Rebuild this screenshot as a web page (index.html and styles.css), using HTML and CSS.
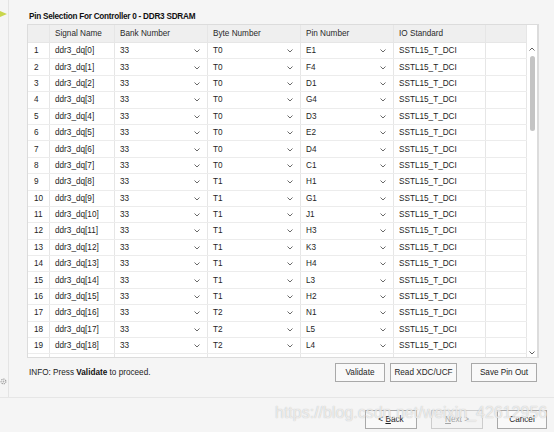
FILE: index.html
```html
<!DOCTYPE html>
<html>
<head>
<meta charset="utf-8">
<link rel="stylesheet" href="styles.css">
</head>
<body>
<div class="app">
  <div class="top">
    <div class="side">
      <svg class="side-arrow" viewBox="0 0 8 8" width="8" height="8"><path d="M0 1 L7 4 L0 7 Z" fill="#c9d64c"/></svg>
      <svg class="side-icon" viewBox="0 0 7 7" width="7" height="7"><circle cx="3.5" cy="3.5" r="2.4" fill="none" stroke="#9a9a9a" stroke-width="1.1" stroke-dasharray="1.2 0.8"/><circle cx="3.5" cy="3.5" r="0.9" fill="#b0b0b0"/></svg>
    </div>
    <div class="main">
      <div class="title">Pin Selection For Controller 0 - DDR3 SDRAM</div>
      <div class="grid">
        <div class="grid-body">
          <div class="row head">
            <div class="cell"></div>
            <div class="cell">Signal Name</div>
            <div class="cell">Bank Number</div>
            <div class="cell">Byte Number</div>
            <div class="cell">Pin Number</div>
            <div class="cell">IO Standard</div>
            <div class="cell"></div>
          </div>
          <div class="rows" id="rows"></div>
        </div>
        <div class="scroll">
          <svg class="sarrow" viewBox="0 0 6 4" width="6" height="4"><path d="M0.5 3.5 L3 1 L5.5 3.5" fill="none" stroke="#606060" stroke-width="1"/></svg>
          <div class="thumb"></div>
          <div class="spacer"></div>
          <svg class="sarrow" viewBox="0 0 6 4" width="6" height="4"><path d="M0.5 0.5 L3 3 L5.5 0.5" fill="none" stroke="#606060" stroke-width="1"/></svg>
        </div>
      </div>
      <div class="actions">
        <div class="info">INFO: Press <b>Validate</b> to proceed.</div>
        <button class="btn b-validate">Validate</button>
        <button class="btn b-read">Read XDC/UCF</button>
        <button class="btn b-save">Save Pin Out</button>
      </div>
    </div>
  </div>
  <div class="bottom">
    <button class="btn nav">&lt; <u>B</u>ack</button>
    <button class="btn nav disabled"><u>N</u>ext &gt;</button>
    <button class="btn nav">Cancel</button>
    <div class="watermark">https://blog.csdn.net/weixin_42612956</div>
  </div>
</div>
<script src="app.js"></script>
</body>
</html>
```
FILE: app.js
```js
var data = [
  ["T0","E1"],["T0","F4"],["T0","D1"],["T0","G4"],["T0","D3"],["T0","E2"],["T0","D4"],["T0","C1"],
  ["T1","H1"],["T1","G1"],["T1","J1"],["T1","H3"],["T1","K3"],["T1","H4"],["T1","L3"],["T1","H2"],
  ["T2","N1"],["T2","L5"],["T2","L4"]
];
var chev = '<svg class="chev" viewBox="0 0 6 4" width="6" height="4"><path d="M0.5 0.5 L3 3 L5.5 0.5" fill="none" stroke="#6a6a6a" stroke-width="1"/></svg>';
var html = "";
for (var i = 0; i < data.length; i++) {
  html += '<div class="row">' +
    '<div class="cell idx">' + (i + 1) + '</div>' +
    '<div class="cell">ddr3_dq[' + i + ']</div>' +
    '<div class="cell dd"><span>33</span>' + chev + '</div>' +
    '<div class="cell dd"><span>' + data[i][0] + '</span>' + chev + '</div>' +
    '<div class="cell dd"><span>' + data[i][1] + '</span>' + chev + '</div>' +
    '<div class="cell">SSTL15_T_DCI</div>' +
    '<div class="cell"></div>' +
    '</div>';
}
html += '<div class="row"><div class="cell"></div><div class="cell"></div><div class="cell"></div><div class="cell"></div><div class="cell"></div><div class="cell"></div><div class="cell"></div></div>';
document.getElementById("rows").innerHTML = html;
```
FILE: styles.css
```css
html, body {
  margin: 0;
  padding: 0;
}
body {
  width: 554px;
  height: 432px;
  overflow: hidden;
  background: #f5f5f5;
  font-family: "Liberation Sans", Arial, sans-serif;
  font-size: 8.2px;
  color: #1e1e1e;
}
.app {
  position: relative;
  width: 554px;
  height: 432px;
  display: flex;
  flex-direction: column;
}
.top {
  height: 397px;
  display: flex;
  border-bottom: 1px solid #e6e6e6;
}
.side {
  width: 8px;
  border-right: 1px solid #e4e4e4;
  display: flex;
  flex-direction: column;
  justify-content: space-between;
}
.side-arrow {
  margin-top: 10px;
  display: block;
}
.side-icon {
  margin-bottom: 12px;
  display: block;
}
.main {
  flex: 1;
  padding: 12px 0 0 18px;
}
.title {
  font-weight: bold;
  font-size: 8.2px;
  letter-spacing: -0.25px;
  line-height: 10px;
  height: 10px;
  padding-left: 2px;
  margin-bottom: 2px;
  color: #111;
}
.grid {
  width: 512px;
  height: 334px;
  box-sizing: border-box;
  border: 1px solid #dcdcdc;
  border-right-width: 2px;
  display: flex;
  background: #fff;
}
.grid-body {
  width: 499px;
  overflow: hidden;
}
.row {
  display: grid;
  grid-template-columns: 22px 65px 93px 93px 93px 92px 41px;
  height: 16.4px;
  box-sizing: border-box;
  border-bottom: 1px solid #ececec;
  background: #fff;
}
.row.head {
  height: 18px;
  background: #efefef;
  border-bottom: 1px solid #e6e6e6;
  color: #2a2a2a;
}
.cell {
  border-right: 1px solid #e6e6e6;
  padding-left: 5px;
  display: flex;
  align-items: center;
  white-space: nowrap;
  overflow: hidden;
}
.cell.idx {
  padding-left: 6px;
}
.cell.dd {
  justify-content: space-between;
  padding-right: 7px;
}
.chev {
  display: block;
  margin-top: 1px;
}
.scroll {
  width: 10px;
  background: #fff;
  display: flex;
  flex-direction: column;
  align-items: center;
  padding-top: 22px;
  padding-bottom: 2px;
}
.sarrow {
  display: block;
  flex: none;
}
.thumb {
  margin-top: 5px;
  width: 5px;
  height: 75px;
  border-radius: 3px;
  background: #c4c4c4;
}
.spacer {
  flex: 1;
}
.actions {
  width: 508px;
  display: flex;
  align-items: center;
  margin-top: 5px;
  margin-left: 2px;
}
.info {
  flex: 1;
  color: #222;
}
.info b {
  color: #111;
}
.btn {
  font-family: "Liberation Sans", Arial, sans-serif;
  font-size: 8.2px;
  color: #1e1e1e;
  background: #f9f9f9;
  border: 1px solid #a9a9a9;
  border-radius: 0;
  height: 19px;
  padding: 0;
  margin: 0;
}
.b-validate {
  width: 50px;
}
.b-read {
  width: 67px;
  margin-left: 5px;
}
.b-save {
  width: 66px;
  margin-left: 14px;
}
.bottom {
  flex: 1;
  display: flex;
  justify-content: flex-end;
  align-items: flex-start;
  padding: 12px 7px 0 0;
  gap: 14px;
}
.btn.nav {
  width: 52px;
}
.btn.nav:last-of-type {
  width: 50px;
}
.btn.disabled {
  color: #a5a5a5;
  border-color: #cdcdcd;
  background: #f3f3f3;
}
.watermark {
  position: absolute;
  left: 275px;
  top: 404px;
  font-family: "Liberation Sans", Arial, sans-serif;
  font-size: 16px;
  color: rgba(255, 255, 255, 0.7);
  text-shadow: 0 0 1px rgba(160, 160, 160, 0.8);
  pointer-events: none;
  white-space: nowrap;
}
```
